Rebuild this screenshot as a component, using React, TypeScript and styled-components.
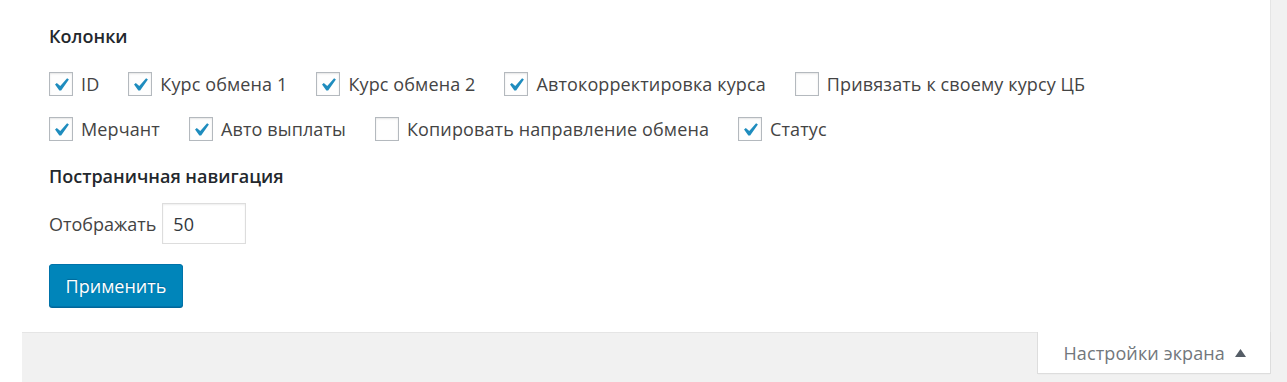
import React from "react";
import styled, { createGlobalStyle } from "styled-components";

const GlobalStyle = createGlobalStyle`
  html, body {
    margin: 0;
    padding: 0;
    background: #fff;
  }
  body {
    font-family: "Open Sans", "Liberation Sans", sans-serif;
    color: #444;
  }
`;

const Page = styled.div`
  display: grid;
  grid-template-columns: 1271px 16px;
  width: 1287px;
  height: 382px;
  overflow: hidden;
`;

const Main = styled.div`
  display: flex;
  flex-direction: column;
`;

const RightStrip = styled.div`
  background: #f1f1f1;
`;

const Panel = styled.div`
  height: 332px;
  box-sizing: border-box;
  padding: 25px 0 0 49px;
  border-right: 1px solid #e5e5e5;
  background: #fff;
  display: flex;
  flex-direction: column;
  align-items: flex-start;
`;

const Heading = styled.h5<{ $gap: number }>`
  margin: 0 0 ${(p) => p.$gap}px;
  font-size: 18px;
  line-height: 22px;
  font-weight: 600;
  color: #23282d;
`;

const CheckRow = styled.div<{ $last?: boolean }>`
  display: flex;
  align-items: center;
  gap: 29px;
  height: 24px;
  margin-bottom: ${(p) => (p.$last ? 24 : 21)}px;
`;

const Label = styled.label`
  display: flex;
  align-items: center;
  gap: 8px;
  font-size: 18px;
  line-height: 24px;
  letter-spacing: 0.12px;
  color: #444;
  white-space: nowrap;
`;

const Box = styled.span`
  position: relative;
  width: 24px;
  height: 24px;
  box-sizing: border-box;
  border: 1px solid #b4b9be;
  background: #fefefe;
  box-shadow: inset 0 1px 2px rgba(0, 0, 0, 0.1);
  flex-shrink: 0;

  svg {
    position: absolute;
    left: 0px;
    top: 0px;
  }
`;

const PerPage = styled.div`
  display: flex;
  align-items: center;
  gap: 6px;
  margin: 16px 0 20px;
  font-size: 18px;
  color: #444;
`;

const NumberInput = styled.input`
  width: 84px;
  height: 41px;
  box-sizing: border-box;
  border: 1px solid #ddd;
  box-shadow: inset 0 1px 2px rgba(0, 0, 0, 0.07);
  padding: 0 10px;
  font-family: "Open Sans", "Liberation Sans", sans-serif;
  font-size: 18px;
  color: #32373c;
  outline: none;
`;

const ApplyButton = styled.button`
  width: 134px;
  height: 43px;
  box-sizing: border-box;
  background: #0085ba;
  border: 1px solid #0073aa;
  border-radius: 3px;
  box-shadow: 0 1px 0 #006799;
  color: #fff;
  font-family: "Open Sans", "Liberation Sans", sans-serif;
  font-size: 18px;
  text-shadow: 0 -1px 1px #006799;
  cursor: pointer;
`;

const BottomBar = styled.div`
  flex: 1;
  margin-left: 22px;
  background: #f1f1f1;
  border-top: 1px solid #e5e5e5;
  display: flex;
  justify-content: flex-end;
  align-items: flex-start;
`;

const Tab = styled.button`
  margin-top: -1px;
  height: 42px;
  width: 234px;
  box-sizing: border-box;
  background: #fff;
  border: 1px solid #ddd;
  border-top: none;
  box-shadow: 0 1px 1px -1px rgba(0, 0, 0, 0.1);
  display: flex;
  align-items: center;
  justify-content: flex-end;
  gap: 10px;
  padding: 0 24px 0 0;
  font-family: "Open Sans", "Liberation Sans", sans-serif;
  font-size: 18px;
  letter-spacing: 0.12px;
  color: #72777c;
  cursor: pointer;
`;

const Check = () => (
  <svg width="24" height="24" viewBox="2 1 18 18">
    <path
      d="M14.83 4.89l1.34.94-5.81 8.38H9.02L5.78 9.67l1.34-1.25 2.57 2.4z"
      fill="#1e8cbe"
    />
  </svg>
);

type Item = { title: string; checked: boolean };

const rowOne: Item[] = [
  { title: "ID", checked: true },
  { title: "Курс обмена 1", checked: true },
  { title: "Курс обмена 2", checked: true },
  { title: "Автокорректировка курса", checked: true },
  { title: "Привязать к своему курсу ЦБ", checked: false },
];

const rowTwo: Item[] = [
  { title: "Мерчант", checked: true },
  { title: "Авто выплаты", checked: true },
  { title: "Копировать направление обмена", checked: false },
  { title: "Статус", checked: true },
];

const CheckItem = ({ item }: { item: Item }) => (
  <Label>
    <Box>{item.checked && <Check />}</Box>
    {item.title}
  </Label>
);

const App = () => {
  return (
    <Page>
      <GlobalStyle />
      <Main>
        <Panel>
          <Heading $gap={25}>Колонки</Heading>
          <CheckRow>
            {rowOne.map((item) => (
              <CheckItem key={item.title} item={item} />
            ))}
          </CheckRow>
          <CheckRow $last>
            {rowTwo.map((item) => (
              <CheckItem key={item.title} item={item} />
            ))}
          </CheckRow>
          <Heading $gap={0}>Постраничная навигация</Heading>
          <PerPage>
            Отображать
            <NumberInput type="text" defaultValue="50" />
          </PerPage>
          <ApplyButton>Применить</ApplyButton>
        </Panel>
        <BottomBar>
          <Tab>
            Настройки экрана
            <svg width="11" height="8" viewBox="0 0 11 8">
              <path d="M5.5 0L11 8H0z" fill="#555d66" />
            </svg>
          </Tab>
        </BottomBar>
      </Main>
      <RightStrip />
    </Page>
  );
};

export default App;
